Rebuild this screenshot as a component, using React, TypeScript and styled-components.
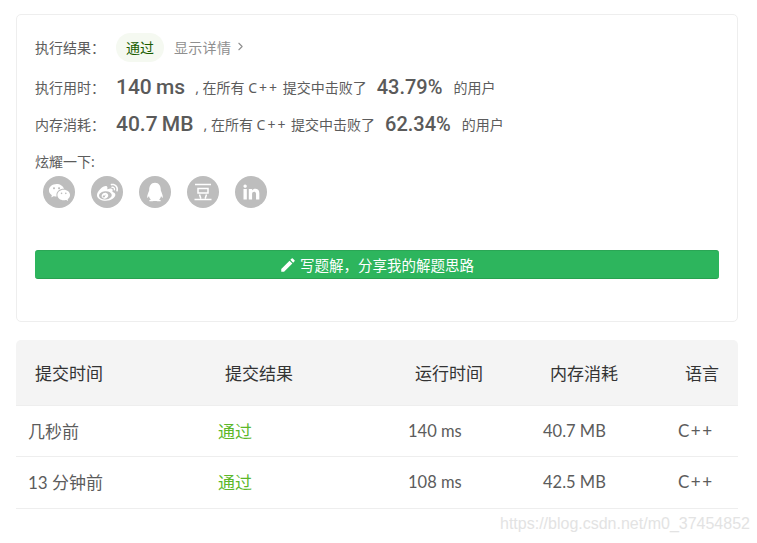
import styled, { createGlobalStyle } from "styled-components";
import { MdEdit } from "react-icons/md";
import { RiWechatFill, RiWeiboFill, RiQqFill, RiLinkedinFill } from "react-icons/ri";
import { FiChevronRight } from "react-icons/fi";

const GlobalStyle = createGlobalStyle`
  html, body {
    margin: 0;
    background: #fff;
    font-family: "Noto Sans", "Noto Sans CJK SC", sans-serif;
  }
`;

const Page = styled.div`
  position: relative;
  width: 757px;
  height: 543px;
  overflow: hidden;
  padding: 14px 19px 0 16px;
  box-sizing: border-box;
`;

const Card = styled.section`
  height: 308px;
  box-sizing: border-box;
  border: 1px solid #eeeeee;
  border-radius: 5px;
  padding: 18px 18px 0;
  display: flex;
  flex-direction: column;
`;

const Row = styled.div<{ $height: number; $top?: number }>`
  display: flex;
  align-items: center;
  box-sizing: border-box;
  height: ${(p) => p.$height}px;
  margin-top: ${(p) => p.$top ?? 0}px;
  padding-bottom: 2px;
  color: #5c5c5c;
  font-size: 14px;
  white-space: nowrap;
`;

const Label = styled.span`
  width: 81px;
  flex: none;
`;

const Badge = styled.span`
  background: #f5f9f1;
  color: #1a5c00;
  border-radius: 15px;
  box-sizing: border-box;
  height: 29px;
  width: 48px;
  padding-bottom: 2px;
  display: flex;
  align-items: center;
  justify-content: center;
  margin: 0 10px -2px 0;
`;

const DetailLink = styled.span`
  display: flex;
  align-items: center;
  gap: 3px;
  color: #8f8f8f;
  letter-spacing: 0.3px;
`;

const BigValue = styled.strong`
  font-family: "Roboto", sans-serif;
  font-weight: 500;
  font-size: 21px;
  word-spacing: -1px;
  color: #5a5a5a;
  margin-right: 10px;
`;

const Percent = styled.strong`
  font-family: "Roboto", sans-serif;
  font-weight: 500;
  font-size: 20px;
  color: #5a5a5a;
  margin: 0 11px 0 10px;
`;

const Lang = styled.span<{ $spacing: number }>`
  letter-spacing: ${(p) => p.$spacing}px;
`;

const Share = styled.div`
  display: flex;
  gap: 16px;
  padding-left: 8px;
  margin-top: 2px;
`;

const ShareIcon = styled.span`
  width: 32px;
  height: 32px;
  border-radius: 50%;
  background: #bdbdbd;
  color: #fff;
  display: flex;
  align-items: center;
  justify-content: center;
`;

const WriteButton = styled.button`
  margin-top: 42px;
  height: 29px;
  width: 684px;
  border: none;
  border-bottom: 1px solid #27a14f;
  border-top: 1px solid #2aa655;
  border-radius: 3px;
  background: #2db55d;
  color: #fff;
  font: inherit;
  font-size: 14.5px;
  display: flex;
  align-items: center;
  justify-content: center;
  gap: 3px;
  padding: 0 1px 0 0;
`;

const Table = styled.div`
  margin-top: 18px;
  font-family: "Lato", "Noto Sans CJK SC", sans-serif;
  font-size: 17px;
`;

const columns = "190px 190px 135px 135px 1fr";

const HeadRow = styled.div`
  display: grid;
  grid-template-columns: ${columns};
  align-items: center;
  height: 66px;
  box-sizing: border-box;
  padding-left: 19px;
  background: #f4f4f4;
  border-bottom: 1px solid #eeeeee;
  border-radius: 5px 5px 0 0;
  color: #333333;
`;

const BodyRow = styled.div<{ $height: number }>`
  display: grid;
  grid-template-columns: ${columns};
  align-items: center;
  height: ${(p) => p.$height}px;
  box-sizing: border-box;
  padding: 0 0 2px 12px;
  border-bottom: 1px solid #eeeeee;
  color: #5c5c5c;
`;

const Passed = styled.span`
  color: #5cb82a;
`;

const Metric = styled.span`
  font-size: 16.5px;
  padding-top: 1px;
`;

const Watermark = styled.div`
  position: absolute;
  left: 500px;
  top: 515px;
  font-family: "Liberation Sans", sans-serif;
  font-size: 16px;
  color: #e3e3e3;
  white-space: nowrap;
`;

const DoubanIcon = () => (
  <svg width="22" height="22" viewBox="0 0 22 22" fill="none" stroke="currentColor" strokeWidth="1.5">
    <path d="M3 3.5h16M6 7.5h10v4.5H6zM7.5 13.5l1.3 4M14.5 13.5l-1.3 4M2.5 18.5h17" />
  </svg>
);

const rows = [
  { time: "几秒前", runtime: "140 ms", memory: "40.7 MB", height: 51 },
  { time: "13 分钟前", runtime: "108 ms", memory: "42.5 MB", height: 52 },
];

export default function App() {
  return (
    <Page>
      <GlobalStyle />
      <Card>
        <Row $height={29}>
          <Label>执行结果：</Label>
          <Badge>通过</Badge>
          <DetailLink>
            显示详情
            <FiChevronRight size={13} />
          </DetailLink>
        </Row>
        <Row $height={37} $top={7}>
          <Label>执行用时：</Label>
          <BigValue>140 ms</BigValue>
          <span>
            , 在所有 <Lang $spacing={2}>C++</Lang> 提交中击败了
          </span>
          <Percent>43.79%</Percent>
          的用户
        </Row>
        <Row $height={37}>
          <Label>内存消耗：</Label>
          <BigValue>40.7 MB</BigValue>
          <span>
            , 在所有 <Lang $spacing={2}>C++</Lang> 提交中击败了
          </span>
          <Percent>62.34%</Percent>
          的用户
        </Row>
        <Row $height={25} $top={6}>
          炫耀一下:
        </Row>
        <Share>
          <ShareIcon>
            <RiWechatFill size={23} />
          </ShareIcon>
          <ShareIcon>
            <RiWeiboFill size={23} />
          </ShareIcon>
          <ShareIcon>
            <RiQqFill size={22} />
          </ShareIcon>
          <ShareIcon>
            <DoubanIcon />
          </ShareIcon>
          <ShareIcon>
            <RiLinkedinFill size={20} />
          </ShareIcon>
        </Share>
        <WriteButton>
          <MdEdit size={18} />
          写题解，分享我的解题思路
        </WriteButton>
      </Card>
      <Table>
        <HeadRow>
          <span>提交时间</span>
          <span>提交结果</span>
          <span>运行时间</span>
          <span>内存消耗</span>
          <span>语言</span>
        </HeadRow>
        {rows.map((row) => (
          <BodyRow key={row.time} $height={row.height}>
            <span>{row.time}</span>
            <Passed>通过</Passed>
            <Metric>{row.runtime}</Metric>
            <Metric>{row.memory}</Metric>
            <Lang $spacing={1.5}>C++</Lang>
          </BodyRow>
        ))}
      </Table>
      <Watermark>https://blog.csdn.net/m0_37454852</Watermark>
    </Page>
  );
}
